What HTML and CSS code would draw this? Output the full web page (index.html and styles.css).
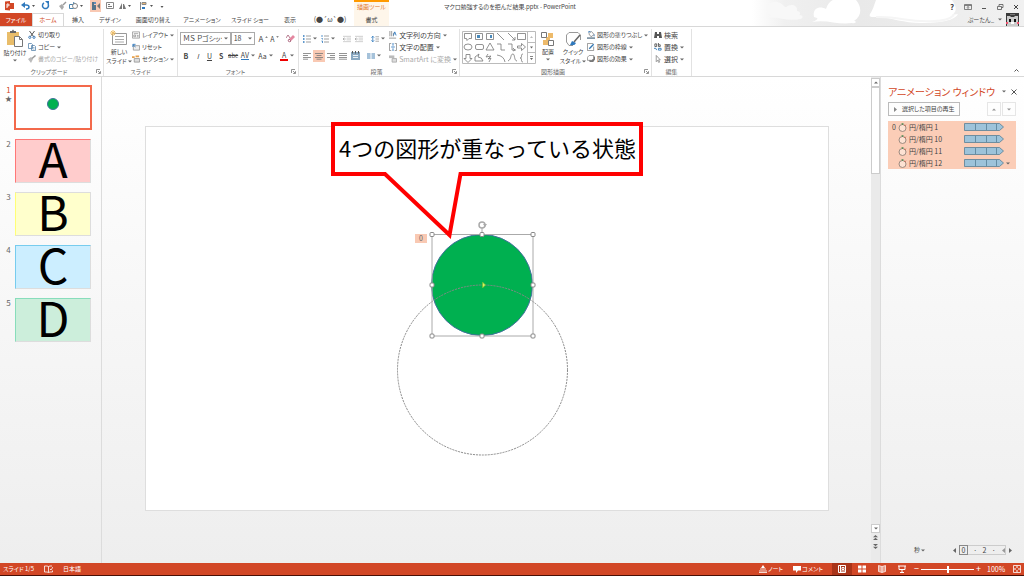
FILE: index.html
```html
<!DOCTYPE html>
<html lang="ja">
<head>
<meta charset="utf-8">
<title>マクロ勉強するのを拒んだ結果.pptx - PowerPoint</title>
<link rel="stylesheet" href="styles.css">
</head>
<body>
<svg class="sprite" aria-hidden="true">
  <symbol id="caret" viewBox="0 0 4 3"><path d="M0 .4h4L2 2.6z" fill="#666"/></symbol>
  <symbol id="caret-up" viewBox="0 0 4 3"><path d="M0 2.6h4L2 .4z" fill="#666"/></symbol>
  <symbol id="launch" viewBox="0 0 5 5"><path d="M.5 4V.5H4M2 2l2 2M4.500 2.200v2.300H2.200" fill="none" stroke="#777" stroke-width=".8"/></symbol>
  <symbol id="cut" viewBox="0 0 8 8"><path d="M1.500 0 5.500 5.500M6.500 0 2.500 5.500" stroke="#555" fill="none"/><g fill="none" stroke="#3c79b5"><circle cx="1.800" cy="6.300" r="1.100"/><circle cx="6" cy="6.300" r="1.100"/></g></symbol>
  <symbol id="copy" viewBox="0 0 8 8"><path d="M.5.5h3l1 1v4h-4zM3.500 2.500h3l1 1v4h-4z" fill="#fff" stroke="#5b87ad" stroke-width=".8"/><path d="M4.500 4.500h2M4.500 6h2" stroke="#5b87ad" stroke-width=".6"/></symbol>
  <symbol id="brush" viewBox="0 0 8 8"><path d="M0 4 3 2l2 2-2 4z" fill="#bbb"/><path d="M4 3.500 7.500.5" stroke="#999" stroke-width="1.500"/></symbol>
  <symbol id="layout" viewBox="0 0 9 8"><path d="M.5.5h8v7h-8zM2 2.500h5M2 4h2v2H2zM5.500 4.500h2M5.500 6h2" fill="none" stroke="#888" stroke-width=".8"/></symbol>
  <symbol id="reset" viewBox="0 0 9 8"><path d="M1.500 2.500h7v5h-7z" fill="#eee" stroke="#888" stroke-width=".8"/><path d="M1 4V1h3M1 1.500 4 4" fill="none" stroke="#2f79bd"/></symbol>
  <symbol id="section" viewBox="0 0 9 8"><path d="M2.500 3.500h6v4h-6z" fill="#ddd" stroke="#888" stroke-width=".8"/><path d="M0 1h3v2H0zM4 0h4v2H4z" fill="#e6a04c"/></symbol>
  <symbol id="erase" viewBox="0 0 9 9"><path d="m3 5 4-4 2 2-4 4z" fill="#e487a0"/><path d="m0 4 2-3 2 3M5 7l-2-2-1 2 2 1z" fill="none" stroke="#a55a73" stroke-width=".8"/></symbol>
  <symbol id="bullets" viewBox="0 0 8 8"><path d="M0 1h1.500M0 4h1.500M0 7h1.500" stroke="#2f79bd" stroke-width="1.400"/><path d="M3 1h5M3 4h5M3 7h5" stroke="#888" stroke-width=".8"/></symbol>
  <symbol id="numbers" viewBox="0 0 8 8"><path d="M1 0v2M.5 3.500h1v1M.5 6h1v2" stroke="#2f79bd" fill="none" stroke-width=".8"/><path d="M3 1h5M3 4h5M3 7h5" stroke="#888" stroke-width=".8"/></symbol>
  <symbol id="indent" viewBox="0 0 9 8"><path d="M0 1h9M4 3h5M4 5h5M0 7h9" stroke="#bbb" stroke-width=".8"/><path d="M0 4h3M1.500 2.500 0 4l1.500 1.500" stroke="#aaa" fill="none"/></symbol>
  <symbol id="spacing" viewBox="0 0 9 8"><path d="M2 1v6M.5 2.500 2 .8l1.500 1.700M.5 5.500 2 7.200l1.500-1.700" stroke="#2f79bd" fill="none" stroke-width=".9"/><path d="M5 1.500h4M5 4h4M5 6.500h4" stroke="#888" stroke-width=".8"/></symbol>
  <symbol id="al" viewBox="0 0 8 8"><path d="M0 1.500h8M0 3.500h5M0 5.500h8M0 7.200h5" stroke="#777" stroke-width=".8"/></symbol>
  <symbol id="ac" viewBox="0 0 8 8"><path d="M0 1.500h8M1.500 3.500h5M0 5.500h8M1.500 7.200h5" stroke="#777" stroke-width=".8"/></symbol>
  <symbol id="ar" viewBox="0 0 8 8"><path d="M0 1.500h8M3 3.500h5M0 5.500h8M3 7.200h5" stroke="#777" stroke-width=".8"/></symbol>
  <symbol id="aj" viewBox="0 0 8 8"><path d="M0 1.500h8M0 3.500h8M0 5.500h8M0 7.200h8" stroke="#777" stroke-width=".8"/></symbol>
  <symbol id="dist" viewBox="0 0 9 9"><path d="M0 1h9v8H0z" fill="#8aa9c2"/><path d="M1.500 0v2.500M4.500 0v2.500M7.500 0v2.500" stroke="#555"/><path d="M2 4.500h5M2 6.500h5" stroke="#e8f0f6"/></symbol>
  <symbol id="cols" viewBox="0 0 8 8"><path d="M0 2h3.500M4.500 2H8M0 4h3.500M4.500 4H8M0 6h3.500M4.500 6H8" stroke="#4c85b5"/></symbol>
  <symbol id="tdir" viewBox="0 0 9 9"><path d="M1 0v6M3 0v6M5 2v4M0 8h8" stroke="#777" stroke-width=".8"/><path d="m5 5 1.500-4L8 5" fill="none" stroke="#2f79bd"/></symbol>
  <symbol id="talign" viewBox="0 0 9 9"><path d="M2.500.5h-2v8h2M6.500.5h2v8h-2" fill="none" stroke="#777" stroke-width=".8"/><path d="M4.500 0v3M4.500 9V6M2.500 4.500h4" stroke="#2f79bd"/></symbol>
  <symbol id="smart" viewBox="0 0 9 8"><path d="M0 0h6v3H0z" fill="#bbb"/><path d="M3.500 3.500h5v4h-5z" fill="#ddd" stroke="#aaa"/></symbol>
  <symbol id="fill" viewBox="0 0 9 9"><path d="M2 3 5 .5 8 4 4.500 6.500z" fill="#fff" stroke="#777" stroke-width=".8"/><path d="M2 2v-1.500h2M8 4v2" stroke="#3c79b5" fill="none"/><path d="M0 7h9v2H0z" fill="#8497a6"/></symbol>
  <symbol id="outline" viewBox="0 0 9 9"><path d="M7 .5H.5v8h7V4" fill="#fff" stroke="#777" stroke-width=".8"/><path d="m2.500 6.500 5-5" stroke="#3478b3" stroke-width="1.500"/></symbol>
  <symbol id="effect" viewBox="0 0 9 9"><path d="m2 5 1 3h4l2-3V2L7 1z" fill="#777"/><path d="M2.500.5h5V4L5.500 6H.5V2.500z" fill="#fff" stroke="#777" stroke-width=".8"/></symbol>
  <symbol id="find" viewBox="0 0 8 8"><path d="M1 1h2v2h2V1h2l1 6H5V5H3v2H0z" fill="#555"/></symbol>
  <symbol id="replace" viewBox="0 0 9 9"><path d="M1 4V1h2v3H1M5 0v4h2V2H5" fill="none" stroke="#555"/><path d="M0 6h2l1 2M5 6h3v2H5z" fill="none" stroke="#3478b3"/></symbol>
  <symbol id="pick" viewBox="0 0 8 9"><path d="M2 .5v7l1.500-1.500 1.300 2.500 1-.5L4.600 5.500h2z" fill="#fff" stroke="#777" stroke-width=".8"/></symbol>
  <symbol id="clock" viewBox="0 0 9 9"><circle cx="4.500" cy="5" r="3.500" fill="#fde2d3" stroke="#85776f" stroke-width=".8"/><path d="M3.500.8h2M4.500.8v1" stroke="#4d8a50"/><path d="M6.700 2.800l1-1" stroke="#d24726"/></symbol>
  <symbol id="bar" viewBox="0 0 40 8"><path d="M.5.500h35L39.500 4 35.500 7.500H.5z" fill="#9dc3da" stroke="#577f95" stroke-width=".8"/><path d="M11.500 1v6M22.500 1v6M32.500 1v6" stroke="#577f95" stroke-width=".8"/></symbol>
</svg>

<div class="app">
<header class="head">
  <svg class="clouds" viewBox="0 0 272 26" preserveAspectRatio="none" aria-hidden="true">
    <defs>
      <linearGradient id="sky"><stop offset="0" stop-color="#fff"/><stop offset=".12" stop-color="#f0f0f0"/><stop offset=".4" stop-color="#e9e9e9"/><stop offset="1" stop-color="#f1f1f1"/></linearGradient>
    </defs>
    <path d="M0 0h272v26H0z" fill="url(#sky)"/>
    <path d="M16 13c-4-8 5-14 12-10 4 2 4 4 6 4 5-4 12-2 11 4 3 0 4 3 2 4 4 0 5 3 1 4-13 3-22-3-33-1 5-2 5-3 1-5z" fill="#f8f8f8"/>
    <path d="M62 17c-2-8 5-12 12-8C78-5 95-4 104 0c6 7 6 16-2 21 3 0 2 3-2 2-15 2-25-4-40-1 8-3 6-4 2-5z" fill="#fff"/>
    <path d="M124 0c-2 5-3 10-6 14-2 4 4 3 8 3 14 1 26 6 42 6 14 0 34-1 38-9l-6 1c6-4 4-9 0-15z" fill="#fff"/>
    <path d="M124 17c24-1 33 6 58 4 9 0 16-2 20-6" fill="none" stroke="#f5f5f5" stroke-width="2"/>
  </svg>
  <div class="titlebar">
    <div class="quick">
      <svg viewBox="0 0 162 12" aria-hidden="true">
        <path d="M5 1.500 10 1v9.500L5 10zM10 3h4v6h-4z" fill="#d24726"/><path d="M7 8V4h1.500q1.500 1 0 2H7" fill="none" stroke="#fff"/>
        <path d="M23 5h3q3 0 3 2t-3 2" fill="none" stroke="#2f79bd" stroke-width="1.500"/><path d="M25 2v6l-4-3z" fill="#2f79bd"/>
        <path d="M44 3a3 3 0 1 0 4 1" fill="none" stroke="#2f79bd" stroke-width="1.500"/><path d="M45 1h4v4z" fill="#2f79bd"/>
        <path d="m59 6 3-2 2 3-2 3z" fill="#aaa"/><path d="m63 5 3-3" stroke="#999" stroke-width="1.500"/>
        <path d="M69.500 4.500h4v-2l4 3-4 3h-4z" fill="#fff" stroke="#4582ae"/><circle cx="75" cy="6" r="2.500" fill="#fff" stroke="#888"/>
        <path d="M90 0h11v12H90z" fill="#f9c9b3"/><path d="M92 2h2v3h2v5h-4z" fill="#55748b"/><path d="m97 6 3-3v6z" fill="#777"/><circle cx="95" cy="3" r="1" fill="#2f79bd"/>
        <path d="M106.500 2.500h7v6h-7z" fill="#fff" stroke="#888"/><path d="M108 4.500h2M108 6.500h4" stroke="#777"/>
        <path d="m119 9 3-6v6zM123 4v5h3l-2-5z" fill="#777"/>
        <path d="M140.500 2v8M142 2.500h4v2h-4z" fill="#edba77" stroke="#888"/><path d="M142 8h3" stroke="#2f79bd" stroke-width="2"/>
        <path d="M32 5h3l-1.500 2zM80 5h3l-1.500 2zM128 5h3l-1.500 2zM150 5h3l-1.500 2zM160.500 6h3l-1.500 2z" fill="#555"/>
      </svg>
    </div>
    <span class="ctx-title">描画ツール</span>
    <h1 class="doc-title">マクロ勉強するのを拒んだ結果.pptx - PowerPoint</h1>
    <div class="win">
      <button class="help" aria-label="ヘルプ">?</button>
      <button aria-label="リボンの表示オプション"><svg viewBox="0 0 8 8"><path d="M.5 1.500h7v5h-7zM.5 2.500h7M4 6V3.500M3 4.500l1-1 1 1" fill="none" stroke="#666" stroke-width=".8"/></svg></button>
      <button aria-label="最小化"><svg viewBox="0 0 8 8"><path d="M2 5.500h4" stroke="#555"/></svg></button>
      <button aria-label="元に戻す"><svg viewBox="0 0 8 8"><path d="M1.500 3.500h4v3h-4zM3 3V1.500h4v3H5.500" fill="none" stroke="#555" stroke-width=".8"/></svg></button>
      <button aria-label="閉じる"><svg viewBox="0 0 8 8"><path d="m2 2 4 4M6 2 2 6" stroke="#444"/></svg></button>
    </div>
  </div>
  <nav class="tabs">
    <button class="tab file">ファイル</button>
    <button class="tab home">ホーム</button>
    <button class="tab t28">挿入</button>
    <button class="tab t36">デザイン</button>
    <button class="tab t50">画面切り替え</button>
    <button class="tab t48">アニメーション</button>
    <button class="tab t48">スライド ショー</button>
    <button class="tab t32">表示</button>
    <button class="tab t48 face">(●´ω`●)</button>
    <button class="tab ctx">書式</button>
    <button class="user">ぷーたん_ <svg class="caret"><use href="#caret"/></svg>
      <svg class="avatar" viewBox="0 0 13 13"><path d="M0 0h13v13H0z" fill="#3c3c3c"/><path d="M1 3h3l1 1h3l1-1h3v10H1z" fill="#ccc"/><path d="M4 1h5v1H4z" fill="#777"/><path d="M3 6h2v3H3zM8 6h2v3H8z" fill="#111"/><path d="M0 9h2v2H0zM11 9h2v2h-2z" fill="#ef5370"/><path d="M5 9h3v2H5z" fill="#fff"/></svg>
    </button>
  </nav>
</header>

<section class="ribbon" aria-label="リボン">
  <div class="group g-clip">
    <div class="body">
      <button class="big"><svg class="i18" viewBox="0 0 18 18"><path d="M1 3h12v13H1z" fill="#e9bd6a"/><path d="M4 4V2h2q1-3 2 0h2v2z" fill="#666"/><path d="M8.500 7.500h5l3 3v7h-8z" fill="#fff" stroke="#777"/><path d="M13.500 7.500v3h3" fill="none" stroke="#777"/></svg><span>貼り付け</span><svg class="caret"><use href="#caret"/></svg></button>
      <div class="stack">
        <button class="cmd"><svg class="i8"><use href="#cut"/></svg>切り取り</button>
        <button class="cmd"><svg class="i8"><use href="#copy"/></svg>コピー<svg class="caret"><use href="#caret"/></svg></button>
        <button class="cmd off"><svg class="i8"><use href="#brush"/></svg>書式のコピー/貼り付け</button>
      </div>
    </div>
    <div class="label"><span>クリップボード</span><svg class="i5"><use href="#launch"/></svg></div>
  </div>
  <div class="group g-slide">
    <div class="body">
      <button class="big"><svg class="i18" viewBox="0 0 18 18"><path d="M2.500 4.500h14v11h-14z" fill="#fff" stroke="#999"/><path d="M5 7.500h9M5 10.500h9M5 13h9" stroke="#aaa"/><path d="M3 1v6M0 4h6M1 2l4 4M5 2 1 6" stroke="#edbd68"/></svg><span>新しい</span><span>スライド <svg class="caret"><use href="#caret"/></svg></span></button>
      <div class="stack">
        <button class="cmd"><svg class="i8"><use href="#layout"/></svg>レイアウト<svg class="caret"><use href="#caret"/></svg></button>
        <button class="cmd"><svg class="i8"><use href="#reset"/></svg>リセット</button>
        <button class="cmd"><svg class="i8"><use href="#section"/></svg>セクション<svg class="caret"><use href="#caret"/></svg></button>
      </div>
    </div>
    <div class="label"><span>スライド</span></div>
  </div>
  <div class="group g-font">
    <div class="lines">
      <div class="line">
        <span class="combo c-name"><select aria-label="フォント"><option>ＭＳ Ｐゴシック 本文</option></select><svg class="caret"><use href="#caret"/></svg></span>
        <span class="combo c-size"><select aria-label="フォント サイズ"><option>18</option></select><svg class="caret"><use href="#caret"/></svg></span>
        <button class="ico grow" aria-label="拡大">A<svg class="tri"><use href="#caret-up"/></svg></button>
        <button class="ico" aria-label="縮小">A<svg class="tri"><use href="#caret"/></svg></button>
        <button class="ico push" aria-label="書式のクリア"><svg class="i9"><use href="#erase"/></svg></button>
      </div>
      <div class="line">
        <button class="ico"><b>B</b></button><button class="ico"><i>I</i></button><button class="ico"><u>U</u></button><button class="ico"><b>S</b></button><button class="ico tiny"><s>abc</s></button>
        <button class="ico wide"><span class="av">AV</span><svg class="caret"><use href="#caret"/></svg></button>
        <button class="ico wide">Aa<svg class="caret"><use href="#caret"/></svg></button>
        <button class="ico wide push"><span class="red">A</span><svg class="caret"><use href="#caret"/></svg></button>
      </div>
    </div>
    <div class="label"><span>フォント</span><svg class="i5"><use href="#launch"/></svg></div>
  </div>
  <div class="group g-para">
    <div class="body">
      <div class="lines">
        <div class="line">
          <button class="ico wide" aria-label="箇条書き"><svg class="i8"><use href="#bullets"/></svg><svg class="caret"><use href="#caret"/></svg></button>
          <button class="ico wide" aria-label="段落番号"><svg class="i8"><use href="#numbers"/></svg><svg class="caret"><use href="#caret"/></svg></button>
          <button class="ico push" aria-label="インデントを減らす"><svg class="i8"><use href="#indent"/></svg></button>
          <button class="ico" aria-label="インデントを増やす"><svg class="i8"><use href="#indent"/></svg></button>
          <button class="ico wide push" aria-label="行間"><svg class="i8"><use href="#spacing"/></svg><svg class="caret"><use href="#caret"/></svg></button>
        </div>
        <div class="line">
          <button class="ico" aria-label="左揃え"><svg class="i8"><use href="#al"/></svg></button>
          <button class="ico on" aria-label="中央揃え"><svg class="i8"><use href="#ac"/></svg></button>
          <button class="ico" aria-label="右揃え"><svg class="i8"><use href="#ar"/></svg></button>
          <button class="ico" aria-label="両端揃え"><svg class="i8"><use href="#aj"/></svg></button>
          <button class="ico" aria-label="均等割り付け"><svg class="i9"><use href="#dist"/></svg></button>
          <button class="ico wide push" aria-label="段組み"><svg class="i8"><use href="#cols"/></svg><svg class="caret"><use href="#caret"/></svg></button>
        </div>
      </div>
      <div class="stack">
        <button class="cmd"><svg class="i8"><use href="#tdir"/></svg>文字列の方向<svg class="caret"><use href="#caret"/></svg></button>
        <button class="cmd"><svg class="i8"><use href="#talign"/></svg>文字の配置<svg class="caret"><use href="#caret"/></svg></button>
        <button class="cmd off"><svg class="i8"><use href="#smart"/></svg>SmartArt に変換<svg class="caret"><use href="#caret"/></svg></button>
      </div>
    </div>
    <div class="label"><span>段落</span><svg class="i5"><use href="#launch"/></svg></div>
  </div>
  <div class="group g-draw">
    <div class="body">
      <button class="gallery" aria-label="図形">
        <svg viewBox="0 0 74 33"><path d="M.5.5h73v32H.5zM65.500.5v32M65.500 11.500h8M65.500 21.500h8" fill="#fff" stroke="#bbb"/>
        <g fill="none" stroke="#777" stroke-width=".8"><path d="M2.500 2.500h7v5H7L5 9.500 4.500 7.500h-2zM13.500 2.500h7v6h-7zM24.500 2.500h7v6h-7zM35 2l7 7M46 2l7 7M53 6v3h-3M55.500 2.500h8v6h-8z"/><ellipse cx="6" cy="16" rx="4" ry="3"/><rect x="13.500" y="13.500" width="8" height="5" rx="1.500"/><path d="m24 19 4-7 4 7zM35 13h4v6h4M46 13h4v6h4M51 17l2 2-2 1M55.500 15h4v-2.500l4 3.500-4 3.500V17h-4zM4 23.500v4H2l4 4 4-4H8v-4zM13 30v-4l4-3-1 3q4 0 5 4zM26 23l-2 3 5-1-3 3 3-1-2 4M35 24q7 1 8 7M46 30c4-2 2-7 5-7 2 0 1 7 4 7M61 23c-3 0 0 4-3 4 3 0 0 4 3 4"/></g>
        <path d="M15 4h3v3h-3zM28 4h2v3h-2z" fill="#4889bb"/><path d="M68 7h3l-1.500-2z" fill="#bbb"/><path d="M68 15.500h3l-1.500 2zM68 27h3l-1.500 2z" fill="#666"/><path d="M68 25.500h3" stroke="#666" stroke-width=".8"/></svg>
      </button>
      <button class="big b-arr"><svg class="i16" viewBox="0 0 16 16"><path d="M8 2h5v5H8zM3 9h5v5H3zM6 6h4v4H6z" fill="#edba6a"/><path d="M1.500 1.500h5v5h-5zM8.500 9.500h5v5h-5z" fill="#fff" stroke="#777"/></svg><span>配置</span><svg class="caret"><use href="#caret"/></svg></button>
      <button class="big b-quick"><svg class="i16" viewBox="0 0 16 16"><path d="M8 14.500H4L1.500 11V4L4 1.500h9L15.500 4v5" fill="#fff" stroke="#999"/><path d="m9 11 6-7" stroke="#666" stroke-width="1.500"/><path d="m5 14 2-4 4 2q-1 3-6 2z" fill="#2f79bd"/></svg><span>クイック</span><span>スタイル <svg class="caret"><use href="#caret"/></svg></span></button>
      <div class="stack">
        <button class="cmd"><svg class="i8"><use href="#fill"/></svg>図形の塗りつぶし<svg class="caret"><use href="#caret"/></svg></button>
        <button class="cmd"><svg class="i8"><use href="#outline"/></svg>図形の枠線<svg class="caret"><use href="#caret"/></svg></button>
        <button class="cmd"><svg class="i8"><use href="#effect"/></svg>図形の効果<svg class="caret"><use href="#caret"/></svg></button>
      </div>
    </div>
    <div class="label"><span>図形描画</span><svg class="i5"><use href="#launch"/></svg></div>
  </div>
  <div class="group g-edit">
    <div class="body">
      <div class="stack">
        <button class="cmd"><svg class="i8"><use href="#find"/></svg>検索</button>
        <button class="cmd"><svg class="i8"><use href="#replace"/></svg>置換<svg class="caret"><use href="#caret"/></svg></button>
        <button class="cmd"><svg class="i8"><use href="#pick"/></svg>選択<svg class="caret"><use href="#caret"/></svg></button>
      </div>
    </div>
    <div class="label"><span>編集</span></div>
  </div>
  <button class="collapse" aria-label="リボンを折りたたむ"><svg class="i5" viewBox="0 0 5 5"><path d="m.5 3.500 2-2 2 2" fill="none" stroke="#555"/></svg></button>
</section>

<main class="work">
  <ol class="thumbs">
    <li class="sel"><span class="num">1<small>★</small></span><button class="thumb white" aria-label="スライド 1"><span class="dot"></span></button></li>
    <li><span class="num">2</span><button class="thumb pink">A</button></li>
    <li><span class="num">3</span><button class="thumb yellow">B</button></li>
    <li><span class="num">4</span><button class="thumb blue">C</button></li>
    <li><span class="num">5</span><button class="thumb green">D</button></li>
  </ol>
  <div class="stage">
    <div class="slide">
      <svg class="canvas" viewBox="0 0 684 385">
        <circle cx="337" cy="159" r="50.500" fill="#00b050" stroke="#41719c"/>
        <circle cx="337.500" cy="244" r="85" fill="none" stroke="#888" stroke-dasharray="2 1"/>
        <path d="M287 108.500h101V210H287zM337 108v-9" fill="none" stroke="#aaa"/>
        <g fill="#fff" stroke="#888"><rect x="285" y="106.500" width="4" height="4" rx="1"/><rect x="335" y="106.500" width="4" height="4" rx="1"/><rect x="386" y="106.500" width="4" height="4" rx="1"/><rect x="285" y="157" width="4" height="4" rx="1"/><rect x="386" y="157" width="4" height="4" rx="1"/><rect x="285" y="208" width="4" height="4" rx="1"/><rect x="335" y="208" width="4" height="4" rx="1"/><rect x="386" y="208" width="4" height="4" rx="1"/></g>
        <circle cx="337" cy="99" r="3" fill="#fff" stroke="#aaa" stroke-width="1.500"/><path d="M338 98h4l-2 3z" fill="#aaa"/>
        <path d="m337.500 156 3 3-3 3z" fill="#d9f35e" stroke="#6bbb2c" stroke-width=".6"/>
        <rect x="270" y="108" width="12" height="9" fill="#f9c9b3"/><text class="tag" x="276" y="115">0</text>
        <path d="M188-2h308v50H315.500L304.500 109 240 48H188z" fill="#fff" stroke="#f00" stroke-width="4"/>
        <text class="callout" x="194" y="31">4つの図形が重なっている状態</text>
      </svg>
    </div>
  </div>
  <div class="scroll">
    <button aria-label="上へ"><svg class="caret"><use href="#caret-up"/></svg></button>
    <div class="grip"></div>
    <button class="down" aria-label="下へ"><svg class="caret"><use href="#caret"/></svg></button>
    <button class="bare" aria-label="前のスライド"><svg class="i5" viewBox="0 0 5 5"><path d="M0 2.300h5L2.500 0zM0 5h5L2.500 2.700z" fill="#666"/></svg></button>
    <button class="bare" aria-label="次のスライド"><svg class="i5" viewBox="0 0 5 5"><path d="M0 0h5L2.500 2.300zM0 2.700h5L2.500 5z" fill="#666"/></svg></button>
  </div>
  <aside class="pane">
    <div class="pane-head"><h2>アニメーション ウィンドウ</h2><svg class="caret"><use href="#caret"/></svg><button aria-label="閉じる"><svg class="i8" viewBox="0 0 8 8"><path d="m1.500 1.500 5 5M6.500 1.500l-5 5" stroke="#555"/></svg></button></div>
    <div class="pane-tools"><button class="play"><svg class="i5" viewBox="0 0 5 5"><path d="M1 0v5l3-2.500z" fill="#888"/></svg>選択した項目の再生</button><button class="step first" aria-label="前へ"><svg class="caret"><use href="#caret-up"/></svg></button><button class="step" aria-label="後へ"><svg class="caret"><use href="#caret"/></svg></button></div>
    <ul class="anim">
      <li><span>0</span><svg class="i9"><use href="#clock"/></svg><span>円/楕円 1</span><svg class="bar"><use href="#bar"/></svg></li>
      <li><span></span><svg class="i9"><use href="#clock"/></svg><span>円/楕円 10</span><svg class="bar"><use href="#bar"/></svg></li>
      <li><span></span><svg class="i9"><use href="#clock"/></svg><span>円/楕円 11</span><svg class="bar"><use href="#bar"/></svg></li>
      <li><span></span><svg class="i9"><use href="#clock"/></svg><span>円/楕円 12</span><svg class="bar"><use href="#bar"/></svg><svg class="caret"><use href="#caret"/></svg></li>
    </ul>
    <div class="time"><button>秒 <svg class="caret"><use href="#caret"/></svg></button>
      <div class="ruler"><svg class="i5" viewBox="0 0 5 5"><path d="M4 0v5L1 2.500z" fill="#666"/></svg><span class="scale"><span class="zero">0</span><span>·</span><span>2</span><span>·</span><svg class="i5" viewBox="0 0 5 5"><path d="M4 0v5L1 2.500z" fill="#999"/></svg></span><svg class="i5" viewBox="0 0 5 5"><path d="M1 0v5l3-2.500z" fill="#666"/></svg></div>
    </div>
  </aside>
</main>

<footer class="status">
  <span>スライド 1/5</span>
  <svg class="book" viewBox="0 0 9 9"><path d="M4.500 1.500v6L3 7H.5V1H3zl1.500-.5h2M4.500 7.500 6 7h2.500V5.500M6 4l1 1 2-3" fill="none" stroke="#fff" stroke-width=".8"/></svg>
  <span>日本語</span>
  <div class="right">
    <button class="note"><svg class="i8" viewBox="0 0 8 8"><path d="M1 4h6M0 6h8M0 7.500h8" stroke="#fff" stroke-width=".8"/><path d="M4 0 6 3H2z" fill="#fff"/></svg>ノート</button>
    <button class="comment"><svg class="i8" viewBox="0 0 8 8"><path d="M0 1h8v4.500H5L3 8V5.500H0z" fill="#fff"/></svg>コメント</button>
    <button class="view on" aria-label="標準"><svg class="i8" viewBox="0 0 8 8"><path d="M.5.500h7v7h-7zM2.500.5v7M4 2.500h2v2H4zM2.500 6h5" fill="none" stroke="#fff"/></svg></button>
    <button class="view" aria-label="スライド一覧"><svg class="i8" viewBox="0 0 8 8"><path d="M0 .5h3.500v3H0zM4.500.5H8v3H4.500zM0 4.500h3.500v3H0zM4.500 4.500H8v3H4.500z" fill="#fff"/></svg></button>
    <button class="view" aria-label="閲覧表示"><svg class="i8" viewBox="0 0 8 8"><path d="M4 1.500v6L.5 6.500v-6zl3.500-1v6L4 7.500" fill="#eaa08e" stroke="#fff" stroke-width=".7"/></svg></button>
    <button class="view" aria-label="スライド ショー"><svg class="i8" viewBox="0 0 8 8"><path d="M0 1h8M1 1v3.500h6V1M4 4.500V7M2 7.500h4" fill="none" stroke="#fff"/></svg></button>
    <button class="sign" aria-label="縮小">−</button>
    <input class="zoom" type="range" aria-label="ズーム" min="0" max="100" value="50">
    <button class="sign" aria-label="拡大">+</button>
    <span class="pct">100%</span>
    <button class="fit" aria-label="ウィンドウに合わせる"><svg class="i8" viewBox="0 0 8 8"><path d="M.5.5h7v7h-7z" fill="none" stroke="#fff" stroke-width=".8"/><path d="M4 1v2M4 5v2M1 4h2M5 4h2" stroke="#fff"/></svg></button>
  </div>
</footer>
</div>
</body>
</html>
```

FILE: styles.css
```css
* { box-sizing: border-box; margin: 0; padding: 0; }
body, button, select {
  font-family: "Noto Sans CJK JP", sans-serif;
  font-size: 6px;
  line-height: 10px;
  color: #444;
  font-feature-settings: "palt";
}
button { background: none; border: 0; white-space: nowrap; }
svg { display: block; flex: none; }
ul, ol { list-style: none; }
.sprite { display: none; }
.app { display: flex; flex-direction: column; min-height: 100vh; background: #fff; }
.caret { display: inline-block; width: 4px; height: 3px; }
.tri { width: 3px; height: 2px; margin-bottom: 4px; }
.i5 { width: 5px; height: 5px; }
.i8 { width: 8px; height: 8px; }
.i9 { width: 9px; height: 9px; }
.i16 { width: 16px; height: 16px; }
.i18 { width: 18px; height: 18px; }

/* Header */
.head { position: relative; border-bottom: 1px solid #d8d8d8; }
.clouds { position: absolute; right: 0; top: 0; width: 272px; height: 100%; }
.titlebar { position: relative; display: flex; height: 13px; }
.quick { width: 354px; }
.quick svg { width: 162px; height: 12px; overflow: visible; }
.ctx-title { width: 35px; border-top: 2px solid #ff9a00; background: #fef6ea; color: #e07428; text-align: center; white-space: nowrap; }
.doc-title { flex: 1; padding-left: 55px; font-size: 6px; font-weight: 400; line-height: 13px; }
.win { display: flex; align-items: center; gap: 8px; padding-right: 4px; }
.win button, .win svg { width: 8px; height: 8px; line-height: 8px; }
.win .help { font-size: 8px; font-weight: 700; }
.tabs { position: relative; display: flex; height: 13px; align-items: stretch; }
.tab { line-height: 13px; text-align: center; }
.file { width: 32px; background: #d24726; color: #fff; }
.home { width: 32px; background: #fff; color: #d24726; border: 1px solid #d8d8d8; border-bottom: 0; line-height: 12px; }
.t28 { width: 28px; }
.t32 { width: 32px; }
.t36 { width: 36px; }
.t48 { width: 48px; }
.t50 { width: 50px; }
.face { font-size: 7px; }
.ctx { width: 35px; background: #fef6ea; }
.user { display: flex; align-items: center; gap: 4px; margin-left: auto; padding-right: 5px; }
.avatar { width: 13px; height: 13px; }

/* Ribbon */
.ribbon { display: flex; height: 50px; border-bottom: 1px solid #d8d8d8; }
.group { display: flex; flex-direction: column; justify-content: space-between; border-right: 1px solid #e2e2e2; margin-top: 2px; padding: 0 2px; }
.g-clip { width: 104px; }
.g-slide { width: 74px; }
.g-font { width: 121px; }
.g-para { width: 161px; }
.g-draw { width: 192px; }
.g-edit { width: 40px; }
.g-para .cmd, .g-edit .cmd, .ico, .combo select { font-size: 7px; }
.body { display: flex; }
.label { display: flex; align-items: center; height: 9px; color: #666; }
.label span { flex: 1; text-align: center; }
.stack { display: flex; flex-direction: column; }
.cmd { display: flex; align-items: center; gap: 2px; height: 12px; }
.off { color: #aaa; }
.big { display: flex; flex: none; flex-direction: column; align-items: center; width: 26px; line-height: 9px; }
.g-clip .big span { margin-top: 1px; }
.big .caret { margin-top: 2px; }
.big span .caret { margin: 0; vertical-align: middle; }
.lines { display: flex; flex-direction: column; gap: 4px; padding-top: 3px; }
.line { display: flex; align-items: center; height: 13px; }
.ico { display: flex; align-items: center; justify-content: center; gap: 2px; width: 12px; height: 12px; }
.tiny { font-size: 6px; }
.grow { margin-left: 3px; font-size: 8px; }
.wide { width: 18px; }
.push { margin-left: 4px; }
.on { background: #f9c9b3; }
.av { border-bottom: 1px solid #2f79bd; line-height: 8px; }
.red { border-bottom: 2px solid #e00; line-height: 8px; width: 8px; }
.combo { position: relative; display: flex; align-items: center; height: 13px; border: 1px solid #aaa; }
.combo select { width: 100%; height: 11px; padding: 0 8px 0 2px; border: 0; background: #fff; appearance: none; line-height: 11px; overflow: hidden; }
.combo .caret { position: absolute; right: 2px; top: 4px; }
.c-name { width: 53px; }
.c-size { width: 25px; }
.g-para .lines { width: 89px; }
.g-draw .body { gap: 1px; }
.gallery { padding-top: 1px; }
.gallery svg { width: 74px; height: 33px; }
.b-arr { width: 22px; padding-top: 2px; }
.b-quick { padding-top: 2px; }
.collapse { margin-left: auto; align-self: flex-end; padding: 0 5px 3px; }

/* Work area */
.work { flex: 1; display: flex; background: linear-gradient(#fff, #eee); }
.thumbs { width: 102px; padding: 8px 10px 0 4px; border-right: 1px solid #dcdcdc; display: flex; flex-direction: column; gap: 9px; }
.thumbs li { display: flex; justify-content: space-between; }
.num { width: 9px; line-height: 9px; text-align: center; color: #666; font-size: 8px; }
.num small { display: block; font-size: 7px; }
.sel .num { color: #d24726; }
.sel small { color: #666; }
.thumb { width: 76px; height: 44px; padding-bottom: 8px; border: 1px solid #ddd; color: #000; font-size: 48px; line-height: 34px; text-align: center; }
.sel .thumb { width: 78px; height: 45px; border: 2px solid #f3694b; margin-right: -1px; }
.white { background: #fff; }
.pink { background: #fcc; border-top-color: #f77; border-left-color: #f77; }
.yellow { background: #ffc; border-left-color: #ff7; }
.blue { background: #cef; border-top-color: #7ce; border-left-color: #7ce; }
.green { background: #cceedb; border-top-color: #8db; border-left-color: #8db; }
.dot { display: block; width: 12px; height: 12px; margin: 0 auto; border-radius: 50%; background: #00b050; border: 1px solid #41719c; }
.stage { flex: 1; padding: 49px 42px 0 43px; }
.slide { aspect-ratio: 684 / 385; background: #fff; box-shadow: inset 0 0 0 1px #dedede; }
.canvas { width: 100%; height: 100%; overflow: visible; }
.callout { font-size: 22px; fill: #000; font-feature-settings: normal; }
.tag { font-size: 7px; fill: #666; text-anchor: middle; }
.scroll { width: 10px; padding: 1px 0 12px; border-right: 1px solid #dcdcdc; background: #eaeaea; display: flex; flex-direction: column; }
.scroll button { display: flex; align-items: center; justify-content: center; height: 9px; background: #fff; border: 1px solid #ccc; }
.scroll .down { margin-top: auto; }
.scroll .bare { background: none; border: 0; }
.grip { height: 87px; background: #fff; border: 1px solid #ccc; }
.pane { width: 143px; padding: 7px 8px 8px 7px; display: flex; flex-direction: column; }
.pane-head { display: flex; align-items: center; gap: 4px; margin-right: -2px; }
.pane-head h2 { flex: 1; font-size: 10px; line-height: 15px; font-weight: 400; color: #d24726; white-space: nowrap; }
.pane-tools { display: flex; margin-top: 3px; gap: 1px; }
.play { display: flex; align-items: center; gap: 4px; width: 72px; height: 14px; padding: 0 4px; border: 1px solid #bbb; background: #fdfdfd; }
.step { display: flex; align-items: center; justify-content: center; width: 14px; height: 14px; border: 1px solid #ddd; opacity: .7; }
.first { margin-left: auto; }
.anim { margin-top: 5px; background: #fbcdb7; font-size: 7px; }
.anim li { display: grid; grid-template-columns: 4px 9px 53px 40px 4px; gap: 2px; align-items: center; height: 12px; padding-left: 4px; }
.bar { width: 40px; height: 8px; }
.time { display: flex; align-items: center; justify-content: space-between; margin-top: auto; padding: 0 3px 0 26px; }
.ruler { display: flex; align-items: center; gap: 2px; font-size: 7px; }
.scale { display: flex; align-items: center; justify-content: space-between; width: 47px; box-shadow: inset 0 0 0 1px #ccc; line-height: 8px; }
.zero { border: 1px solid #888; width: 9px; text-align: center; }

/* Status bar */
.status { display: flex; align-items: center; gap: 10px; height: 13px; padding: 0 3px; background: #d24726; border-bottom: 1px solid #4a0f05; color: #fff; }
.status button { display: flex; align-items: center; justify-content: center; gap: 1px; height: 12px; color: #fff; }
.book { width: 9px; height: 9px; }
.right { display: flex; align-items: center; margin-left: auto; }
.comment { margin: 0 9px 0 10px; }
.view { width: 20px; }
.status .view.on { background: #a93419; }
.status .sign { width: 9px; font-size: 9px; }
.zoom { width: 53px; height: 8px; appearance: none; background: linear-gradient(#fff, #fff) center / 100% 1px no-repeat; }
.zoom::-webkit-slider-thumb { appearance: none; width: 2px; height: 7px; background: #fff; }
.pct { width: 30px; font-size: 7px; padding-left: 4px; }
```
